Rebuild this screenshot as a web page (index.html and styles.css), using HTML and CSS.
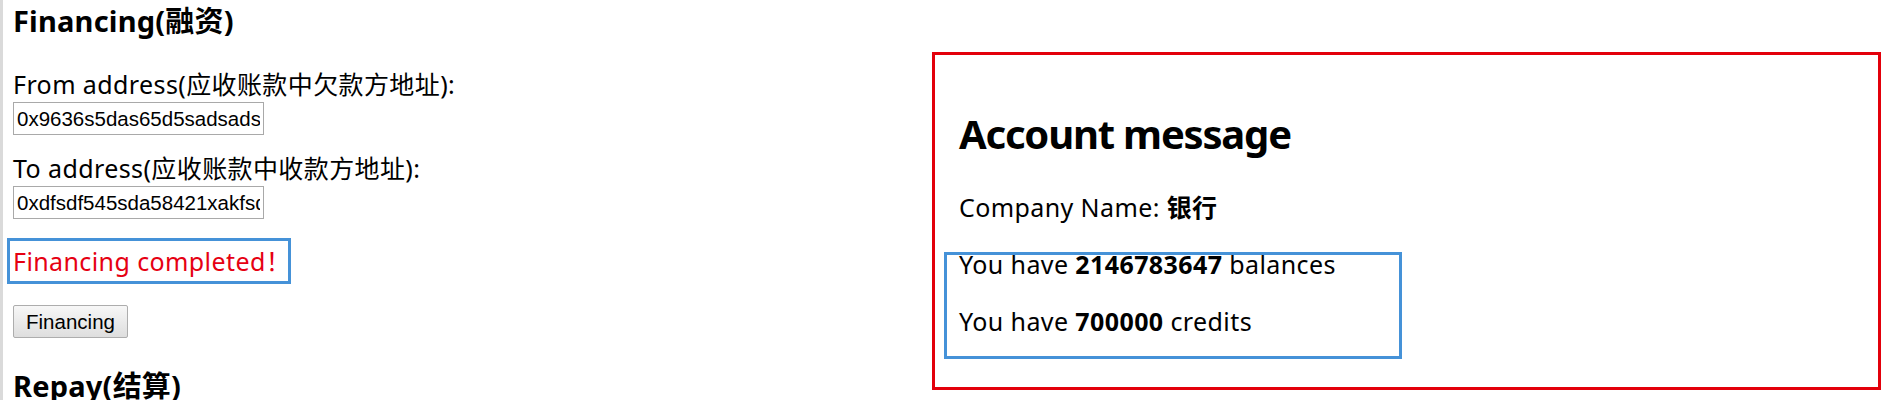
FILE: index.html
```html
<!DOCTYPE html>
<html lang="zh">
<head>
<meta charset="utf-8">
<title>Financing</title>
<link rel="stylesheet" href="styles.css">
</head>
<body>
<div class="page">
  <div class="left">
    <h3 class="section-title">Financing(融资)</h3>
    <div class="field first">
      <div class="label">From address(应收账款中欠款方地址):</div>
      <input class="addr" type="text" value="0x9636s5das65d5sadsads">
    </div>
    <div class="field">
      <div class="label">To address(应收账款中收款方地址):</div>
      <input class="addr" type="text" value="0xdfsdf545sda58421xakfsdfsd">
    </div>
    <div class="status">Financing completed！</div>
    <button class="btn" type="button">Financing</button>
    <h3 class="section-title repay">Repay(结算)</h3>
  </div>
  <div class="panel">
    <h2 class="panel-title">Account message</h2>
    <p class="row company">Company Name: <b>银行</b></p>
    <p class="row">You have <b>2146783647</b> balances</p>
    <p class="row">You have <b>700000</b> credits</p>
    <div class="mark"></div>
  </div>
</div>
</body>
</html>
```

FILE: styles.css
```css
html, body {
  margin: 0;
  padding: 0;
  background: #fff;
}
body {
  width: 1881px;
  height: 400px;
  overflow: hidden;
  font-family: "Noto Sans", "Noto Sans CJK SC", sans-serif;
  font-size: 25px;
  line-height: 33px;
  color: #000;
}
.page {
  display: flex;
  align-items: flex-start;
  border-left: 3px solid #dadada;
  height: 400px;
  box-sizing: border-box;
  overflow: hidden;
}
.left {
  width: 929px;
  flex: none;
  padding-left: 10px;
  box-sizing: border-box;
  display: flex;
  flex-direction: column;
  align-items: flex-start;
}
.section-title {
  margin: 3px 0 0;
  font-size: 29px;
  line-height: 36px;
  font-weight: 700;
  letter-spacing: 0.2px;
  white-space: nowrap;
}
.section-title.repay {
  margin-top: 30px;
}
.field {
  display: flex;
  flex-direction: column;
  align-items: flex-start;
  gap: 1px;
  margin-top: 17px;
}
.field.first {
  margin-top: 29px;
}
.label {
  line-height: 33px;
  letter-spacing: 0.4px;
  white-space: nowrap;
}
.addr {
  width: 251px;
  height: 33px;
  box-sizing: border-box;
  margin: 0;
  border: 1px solid #a9a9a9;
  padding: 0 3px;
  font-family: "Liberation Sans", Arial, sans-serif;
  font-size: 20.5px;
  color: #000;
  background: #fff;
  outline: none;
}
.status {
  margin-top: 19px;
  margin-left: -6px;
  width: 284px;
  box-sizing: border-box;
  border: 3px solid #4592d8;
  padding: 4px 0 3px 3px;
  color: #e60012;
  line-height: 33px;
  letter-spacing: 0.4px;
  white-space: nowrap;
}
.btn {
  margin-top: 21px;
  width: 115px;
  height: 33px;
  box-sizing: border-box;
  border: 1px solid #adadad;
  border-radius: 2px;
  background: linear-gradient(#f7f7f7, #dedede);
  font-family: "Liberation Sans", Arial, sans-serif;
  font-size: 20.5px;
  color: #000;
  padding: 0;
}
.panel {
  position: relative;
  margin-top: 52px;
  width: 949px;
  flex: none;
  box-sizing: border-box;
  border: 3px solid #e3000b;
  padding: 0 24px 25px 24px;
}
.panel-title {
  margin: 55px 0 33px;
  font-size: 40px;
  line-height: 48px;
  font-weight: 700;
  letter-spacing: -1.2px;
}
.row {
  margin: 24px 0 0;
  line-height: 33px;
  letter-spacing: 0.4px;
  white-space: nowrap;
}
.row.company {
  margin-top: 0;
}
.row b {
  font-weight: 700;
}
.row:last-of-type {
  margin-bottom: 24px;
}
.mark {
  position: absolute;
  left: 9px;
  top: 197px;
  width: 458px;
  height: 107px;
  box-sizing: border-box;
  border: 3px solid #4592d8;
  pointer-events: none;
}
```
